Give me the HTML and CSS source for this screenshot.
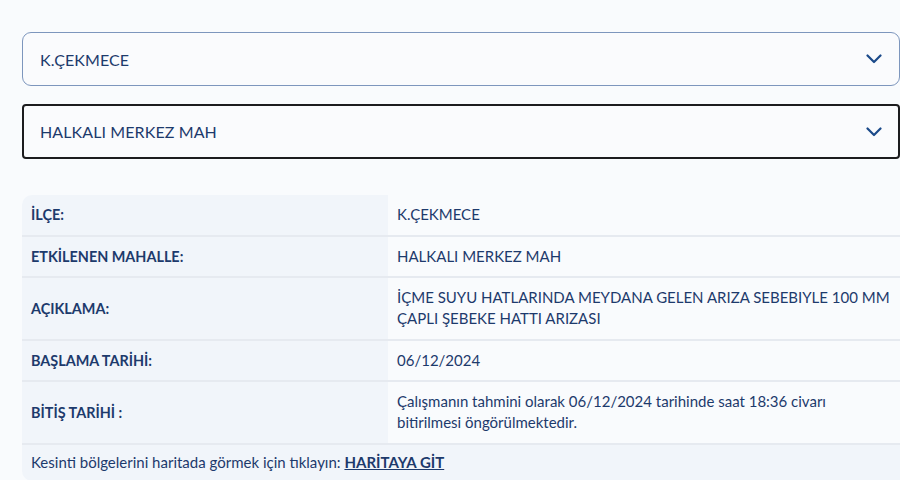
FILE: index.html
```
<!DOCTYPE html>
<html lang="tr">
<head>
<meta charset="utf-8">
<title>Kesinti</title>
<link rel="stylesheet" href="styles.css">
</head>
<body>
<div class="page">
  <div class="select">
    <span class="select-text">K.ÇEKMECE</span>
    <svg class="chev" width="16" height="10" viewBox="0 0 16 10"><path d="M1.5 1.5 L8 8 L14.5 1.5" fill="none" stroke="#1b4a8a" stroke-width="2.2" stroke-linecap="round" stroke-linejoin="round"/></svg>
  </div>
  <div class="select select-focus">
    <span class="select-text">HALKALI MERKEZ MAH</span>
    <svg class="chev" width="16" height="10" viewBox="0 0 16 10"><path d="M1.5 1.5 L8 8 L14.5 1.5" fill="none" stroke="#1b4a8a" stroke-width="2.2" stroke-linecap="round" stroke-linejoin="round"/></svg>
  </div>

  <div class="info">
    <div class="lbl">İLÇE:</div>
    <div class="val">K.ÇEKMECE</div>
    <div class="lbl">ETKİLENEN MAHALLE:</div>
    <div class="val">HALKALI MERKEZ MAH</div>
    <div class="lbl">AÇIKLAMA:</div>
    <div class="val">İÇME SUYU HATLARINDA MEYDANA GELEN ARIZA SEBEBIYLE 100 MM<br>ÇAPLI ŞEBEKE HATTI ARIZASI</div>
    <div class="lbl">BAŞLAMA TARİHİ:</div>
    <div class="val">06/12/2024</div>
    <div class="lbl">BİTİŞ TARİHİ :</div>
    <div class="val">Çalışmanın tahmini olarak 06/12/2024 tarihinde saat 18:36 civarı<br>bitirilmesi öngörülmektedir.</div>
    <div class="full">Kesinti bölgelerini haritada görmek için tıklayın: <a class="map-link" href="#">HARİTAYA GİT</a></div>
  </div>
</div>
</body>
</html>
```

FILE: styles.css
```
html, body {
  margin: 0;
  padding: 0;
  background: #f9fbfd;
}
body {
  font-family: "Lato", "Open Sans", sans-serif;
  color: #1d3a6c;
  overflow: hidden;
}
.page {
  padding: 32px 0 0 22px;
  width: 878px;
  display: flex;
  flex-direction: column;
}
.select {
  height: 54px;
  box-sizing: border-box;
  border: 1px solid #7d96bd;
  border-radius: 9px;
  background: #fafbfd;
  display: flex;
  align-items: center;
  justify-content: space-between;
  padding: 0 17px 0 17px;
  margin-bottom: 18px;
}
.select-focus {
  height: 55px;
  border: 2px solid #1c1c1e;
  border-radius: 4px;
  padding-left: 16px;
  padding-right: 16px;
  margin-bottom: 36px;
}
.select-text {
  font-size: 16px;
  color: #1d3a6c;
  letter-spacing: 0.1px;
}
.chev {
  display: block;
}
.info {
  display: grid;
  grid-template-columns: 366px 1fr;
  border-radius: 10px 0 0 10px;
  overflow: hidden;
  font-size: 15px;
  line-height: 21px;
}
.lbl, .val, .full {
  padding: 9px 9px 9.5px 9px;
  border-bottom: 2px solid #e6eaf0;
}
.lbl {
  background: #f1f5fa;
  font-weight: 700;
  font-size: 14.4px;
  color: #1d3a6c;
  display: flex;
  align-items: center;
}
.val {
  background: #f9fbfd;
}
.full {
  grid-column: 1 / 3;
  background: #f1f5fa;
  border-bottom: none;
  padding: 7px 9px 8px 9px;
}
.map-link {
  color: #1d3a6c;
  font-weight: 700;
  text-decoration: underline;
}
```
